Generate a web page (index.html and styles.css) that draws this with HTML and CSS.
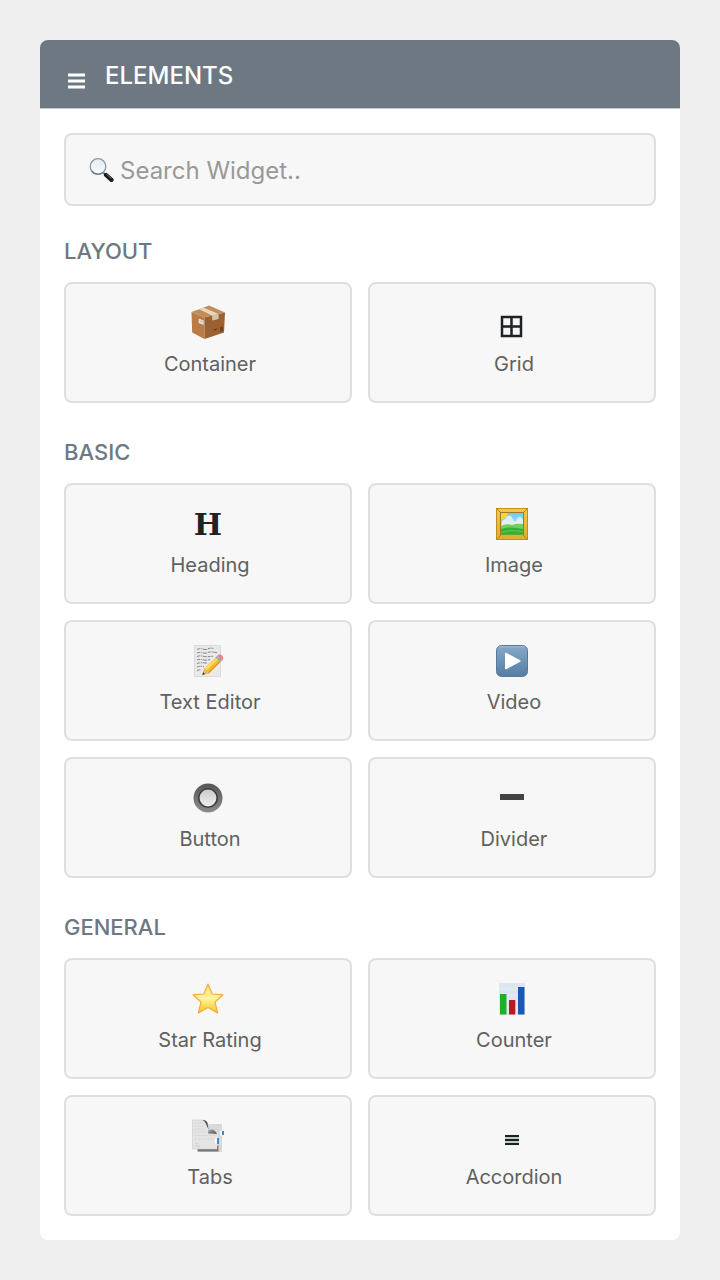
FILE: index.html
```html
<!DOCTYPE html>
<html lang="en">
<head>
    <meta charset="UTF-8">
    <meta name="viewport" content="width=device-width, initial-scale=1.0">
    <title>Elements</title>
    <link rel="stylesheet" href="styles.css">
</head>
<body>
    <div class="panel">
        <header class="panel-header">
            <button class="menu-btn" type="button" aria-label="Menu">
                <svg width="17" height="16" viewBox="0 0 17 16"><path d="M0 .5h17v3H0zM0 6.500h17v3H0zM0 12.500h17v3H0z" fill="#fff"/></svg>
            </button>
            <h1>ELEMENTS</h1>
        </header>

        <main class="panel-body">
            <label class="search">
                <svg width="26" height="26" viewBox="0 0 26 26">
                    <defs>
                        <linearGradient id="lens" x1="0" y1="0" x2="0" y2="1"><stop offset="0" stop-color="#e3ecf0"/><stop offset="1" stop-color="#fbfbfb"/></linearGradient>
                    </defs>
                    <path d="M15 15.500l3 2.600" stroke="#8a8d90" stroke-width="2"/>
                    <path d="M18 18l5.500 4.800" stroke="#17191b" stroke-width="4.200" stroke-linecap="round"/>
                    <path d="M18.500 17.500l5 4.200" stroke="#6a6d70" stroke-width="1"/>
                    <circle cx="10" cy="9.500" r="7.800" fill="url(#lens)" stroke="#8798a5" stroke-width="1.300"/>
                    <path d="M3.700 13.800a7.800 7.800 0 0 0 11.500 1.600" fill="none" stroke="#6b6e72" stroke-width="1.200"/>
                </svg>
                <input type="text" placeholder="Search Widget.." aria-label="Search Widget">
            </label>

            <section>
                <h2>LAYOUT</h2>
                <div class="widgets">
                    <button class="widget" type="button">
                        <svg class="icon" viewBox="0 0 36 36">
                            <path d="M1.500 8L14.500 13.200V35L2.200 28.500z" fill="#b97b47"/>
                            <path d="M14.500 13.200L35 8.500L34 28.600L14.500 35z" fill="#9c6132"/>
                            <path d="M1.500 8L19 1.500L35 8.500L14.500 13.200z" fill="#c28c5b"/>
                            <path d="M9 5.200L13.200 3.600L28.600 10L22.200 11.500z" fill="#ead7bd"/>
                            <path d="M22.200 11.500L28.600 10V15L22.200 16.500z" fill="#d5c2aa"/>
                            <path d="M8.600 14.400L13.700 16.400V21L8.600 19z" fill="#e4dfd9"/>
                            <path d="M10 17l2.700 1" stroke="#bbb"/>
                            <path d="M23 25.400l5-1.500-2.600 3.200zM30 23.300l3-.8v4.400l-3 .9z" fill="#70411e"/>
                        </svg>
                        <span>Container</span>
                    </button>
                    <button class="widget" type="button">
                        <svg class="icon" viewBox="0 0 36 36"><path d="M8 13h19v19H8zM17.500 13v19M8 22.500h19" fill="none" stroke="#1d2226" stroke-width="2.500"/></svg>
                        <span>Grid</span>
                    </button>
                </div>
            </section>

            <section>
                <h2>BASIC</h2>
                <div class="widgets">
                    <button class="widget" type="button">
                        <b class="icon letter" aria-hidden="true">H</b>
                        <span>Heading</span>
                    </button>
                    <button class="widget" type="button">
                        <svg class="icon" viewBox="0 0 36 36">
                            <defs>
                                <linearGradient id="sky" x1="0" y1="0" x2="0" y2="1"><stop offset="0" stop-color="#72c9ed"/><stop offset="1" stop-color="#cdf0f5"/></linearGradient>
                                <linearGradient id="gold" x1="0" y1="0" x2="0" y2="1"><stop offset="0" stop-color="#f1ca48"/><stop offset="1" stop-color="#dfac2e"/></linearGradient>
                            </defs>
                            <rect x="2" y="3" width="32" height="32" rx="1" fill="url(#gold)"/>
                            <rect x="2.500" y="3.500" width="31" height="31" fill="none" stroke="#c28e1d"/>
                            <path d="M2 3l5 5M34 3l-5 5M2 35l5-5M34 35l-5-5" stroke="#b98518"/>
                            <rect x="6.500" y="7.500" width="23" height="22" fill="url(#sky)" stroke="#a37a22"/>
                            <path d="M7 8h6.500a5 5 0 0 1-6.500 5.700z" fill="#ffd52e"/>
                            <path d="M8 17q1-3 4-3 1-4 5-3l3 5 2 1q1-5 4-5 3 1 3 4v5H8z" fill="#e6edf1"/>
                            <path d="M7 21q5-3 11-1 5-2 11-1v10.500H7z" fill="#73cf57"/>
                            <path d="M7 24q10-3 22 0v5.500H7z" fill="#37ae35"/>
                            <path d="M7 27.500q9-3 22-1" fill="none" stroke="#62cb55"/>
                        </svg>
                        <span>Image</span>
                    </button>
                    <button class="widget" type="button">
                        <svg class="icon" viewBox="0 0 36 36">
                            <rect x="4.500" y="3.500" width="26" height="31" fill="#e9e9e9" stroke="#d2d2d2" stroke-width=".7"/>
                            <g fill="none" stroke="#777" stroke-width=".9" stroke-dasharray="3 .8 1.500 .7 4 1">
                                <path d="M7 7.500q3-1.500 6-.4t5-.2 6-.4M7 11q3-1.200 6-.2t5-.3 9 .2M7 14.500q3-1.200 6-.2t11-.3M7 18q3-1.200 6-.2t7-.4M7 21.500q3-1.200 10-.4M7 25q3-1.200 7-.4M7 28.500q2-1.200 4-.3"/>
                            </g>
                            <path d="M12.300 33l2-6.500L26.500 14.700l4.600 4.600L19 31.200z" fill="#f5b82b"/>
                            <path d="M14.800 26.500L27 15l1.700 1.700L16.500 28.500z" fill="#ffdb62"/>
                            <path d="M18.500 31l12.300-12" stroke="#c57e12"/>
                            <path d="M12.300 33l2-6.500 2.200 2.200 2.500 2.500z" fill="#dfb879"/>
                            <path d="M12.300 33l.8-2.700 1.900 1.800z" fill="#333"/>
                            <path d="M25.500 15.500l1.800-1.700 4.800 4.700-1.800 1.800z" fill="#9eabb0"/>
                            <path d="M27.300 13.800l1.200-1.100q1.800-.9 3.600.8 1.800 2 1 3.900l-1 1.100z" fill="#eb7f8c"/>
                        </svg>
                        <span>Text Editor</span>
                    </button>
                    <button class="widget" type="button">
                        <svg class="icon" viewBox="0 0 36 36">
                            <defs><linearGradient id="play" x1="0" y1="0" x2="0" y2="1"><stop offset="0" stop-color="#86a9c7"/><stop offset="1" stop-color="#557ea3"/></linearGradient></defs>
                            <rect x="2.500" y="3.500" width="31" height="31" rx="5" fill="url(#play)" stroke="#587a99"/>
                            <path d="M5 4.800h26" stroke="#a4bdd2"/>
                            <path d="M11 11.500q0-1.200 1.200-.7l14 7.500q.9.700 0 1.400l-14 7.500q-1.200.5-1.200-.7z" fill="#fff"/>
                        </svg>
                        <span>Video</span>
                    </button>
                    <button class="widget" type="button">
                        <svg class="icon" viewBox="0 0 36 36">
                            <defs>
                                <linearGradient id="ring" x1="0" y1="0" x2="0" y2="1"><stop offset="0" stop-color="#565656"/><stop offset="1" stop-color="#8c8c8c"/></linearGradient>
                                <linearGradient id="knob" x1="0" y1="0" x2="0" y2="1"><stop offset="0" stop-color="#c9c9c9"/><stop offset="1" stop-color="#f1f1f1"/></linearGradient>
                            </defs>
                            <circle cx="18" cy="19" r="14.500" fill="url(#ring)"/>
                            <circle cx="18" cy="19" r="9.200" fill="url(#knob)" stroke="#3d3d3d" stroke-width="1.600"/>
                        </svg>
                        <span>Button</span>
                    </button>
                    <button class="widget" type="button">
                        <svg class="icon" viewBox="0 0 36 36"><path d="M6 15h24v6H6z" fill="#434343"/></svg>
                        <span>Divider</span>
                    </button>
                </div>
            </section>

            <section>
                <h2>GENERAL</h2>
                <div class="widgets">
                    <button class="widget" type="button">
                        <svg class="icon" viewBox="0 0 36 36">
                            <defs><linearGradient id="star" x1="0" y1="0" x2="0" y2="1"><stop offset="0" stop-color="#ffe36b"/><stop offset=".5" stop-color="#fff3a3"/><stop offset="1" stop-color="#fdc117"/></linearGradient></defs>
                            <path d="M18 4L22.200 14L33 14.800L25 22L27.600 33L18 27.500L8.400 33L11 22L3 14.800L13.800 14z" fill="url(#star)" stroke="#efae38" stroke-width="1.200" stroke-linejoin="round"/>
                        </svg>
                        <span>Star Rating</span>
                    </button>
                    <button class="widget" type="button">
                        <svg class="icon" viewBox="0 0 36 36">
                            <rect x="5" y="3" width="26" height="32" fill="#dce7f1"/>
                            <path d="M5 9h26M5 15h26M5 21h26M5 27h26" stroke="#e9f0f6" stroke-width=".8"/>
                            <path d="M6 14h6.500v20.500H6z" fill="#20ae2c"/>
                            <path d="M15 20h6.300v14.500H15z" fill="#b91922"/>
                            <path d="M24 7h6.500v27.500H24z" fill="#1b58b4"/>
                        </svg>
                        <span>Counter</span>
                    </button>
                    <button class="widget" type="button">
                        <svg class="icon" viewBox="0 0 36 36">
                            <defs><linearGradient id="curl" x1="0" y1="0" x2="1" y2="1"><stop offset="0" stop-color="#aaa"/><stop offset="1" stop-color="#555"/></linearGradient></defs>
                            <path d="M8 7h24v28H8z" fill="#d9d9d9"/>
                            <path d="M7.500 32h21v2.500h-21z" fill="#777"/>
                            <path d="M2.500 3H13q3 0 5 4 1.500 4 3 6 4-1 7.500 3.500V32h-26z" fill="#e5e5e5" stroke="#cacaca" stroke-width=".6"/>
                            <path d="M12.500 3q4 0 5 3 .5 4 1.500 7-2-3-3-6-1-2.500-3.500-4z" fill="#555"/>
                            <path d="M18.500 13q6-2 8.500 4-4-.5-9-.5z" fill="url(#curl)"/>
                            <path d="M4 6h8M4 9h10M4 12h11M4 15h12M4 18.500h23M4 22h20" stroke="#d6d6d6" stroke-width=".8"/>
                            <path d="M5 26l3 1M5 28.500l5 1" stroke="#ccc"/>
                            <path d="M27 21h2v6h-2z" fill="#3689d6"/>
                            <path d="M25 21.500h2v5h-2zM30 14h2v4.500h-2z" fill="#fff"/>
                            <path d="M32 14h2v4h-2z" fill="#3689d6"/>
                            <path d="M27 28.500h1.500v4H27z" fill="#977"/>
                        </svg>
                        <span>Tabs</span>
                    </button>
                    <button class="widget" type="button">
                        <svg class="icon" viewBox="0 0 36 36"><path d="M11 18h14v2H11zM11 22h14v2H11zM11 26h14v2H11z" fill="#1d2226"/><path d="M11 20h14v2H11zM11 24h14v2H11z" fill="#c5cbcc"/></svg>
                        <span>Accordion</span>
                    </button>
                </div>
            </section>
        </main>
    </div>
</body>
</html>
```
FILE: styles.css
```css
* {
    box-sizing: border-box;
}

body {
    margin: 0;
    padding: 40px;
    background: #efefef;
    font-family: 'Inter', 'Liberation Sans', sans-serif;
}

.panel {
    background: #fff;
    border-radius: 8px;
    overflow: hidden;
}

.panel-header {
    display: flex;
    align-items: center;
    gap: 20px;
    padding: 20px 28px 16px;
    background: #6d7882;
    border-bottom: 1px solid #c3c8cc;
    color: #fff;
}

.menu-btn {
    display: flex;
    padding: 10px 0 0;
    border: none;
    background: none;
    cursor: pointer;
}

h1 {
    margin: 0;
    font-size: 24px;
    font-weight: 500;
    line-height: 32px;
}

.panel-body {
    padding: 24px;
}

.search {
    display: flex;
    align-items: center;
    gap: 6px;
    padding: 20px 22px 19px;
    margin-bottom: 30px;
    background: #f7f7f7;
    border: 2px solid #dfdfdf;
    border-radius: 8px;
}

.search svg {
    flex: none;
}

.search input {
    flex: 1;
    min-width: 0;
    height: 30px;
    padding: 0;
    border: none;
    outline: none;
    background: none;
    color: #666;
    font-family: inherit;
    font-size: 24px;
}

.search input::placeholder {
    color: #999;
}

section + section {
    margin-top: 34px;
}

h2 {
    margin: 0 0 16px;
    color: #6d7882;
    font-size: 22px;
    font-weight: 500;
    line-height: 30px;
}

.widgets {
    display: grid;
    grid-template-columns: 1fr 1fr;
    gap: 16px;
}

.widget {
    display: flex;
    flex-direction: column;
    align-items: center;
    gap: 10px;
    padding: 20px 8px 23px;
    background: #f7f7f7;
    border: 2px solid #dfdfdf;
    border-radius: 8px;
    color: #606060;
    font-family: inherit;
    font-size: 20px;
    font-weight: 400;
    line-height: 28px;
    cursor: grab;
}

.widget span {
    padding-left: 4px;
}

.icon {
    width: 36px;
    height: 36px;
}

.letter {
    color: #1d2226;
    font-family: 'DejaVu Serif', serif;
    font-size: 30px;
    font-weight: bold;
    line-height: 40px;
}
```
